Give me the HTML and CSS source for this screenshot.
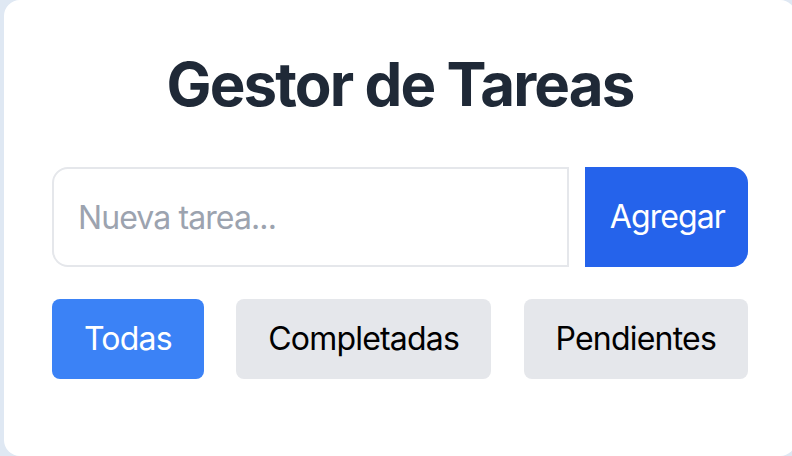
FILE: index.html
```html
<!DOCTYPE html>
<html lang="es">
<head>
<meta charset="utf-8">
<link rel="stylesheet" href="styles.css">
</head>
<body>
<div class="card">
  <h1 class="title">Gestor de Tareas</h1>
  <div class="add-row">
    <input class="task-input" type="text" placeholder="Nueva tarea...">
    <button class="add-btn">Agregar</button>
  </div>
  <div class="filters">
    <button class="filter active">Todas</button>
    <button class="filter">Completadas</button>
    <button class="filter">Pendientes</button>
  </div>
</div>
</body>
</html>
```
FILE: styles.css
```css
html, body {
  margin: 0;
  padding: 0;
  height: 456px;
  overflow: hidden;
}
body {
  background: #dfe8f3;
  font-family: Inter, "Noto Sans", sans-serif;
}
.card {
  box-sizing: border-box;
  width: 792px;
  height: 456px;
  margin-left: 4px;
  background: #ffffff;
  border-radius: 16px;
  padding: 48px;
}
.title {
  margin: 0 0 47px;
  font-size: 60px;
  line-height: 72px;
  font-weight: 700;
  letter-spacing: -1.9px;
  color: #1f2937;
  text-align: center;
}
.add-row {
  display: flex;
  gap: 16px;
  margin-bottom: 32px;
}
.task-input {
  flex: 1;
  min-width: 0;
  box-sizing: border-box;
  height: 100px;
  border: 2px solid #e5e7eb;
  border-radius: 16px 0 0 16px;
  padding: 24px 24px;
  font-family: Inter, "Noto Sans", sans-serif;
  font-size: 32px;
  line-height: 48px;
  letter-spacing: -0.9px;
  color: #111827;
  outline: none;
}
.task-input::placeholder {
  color: #9ca3af;
}
.add-btn {
  height: 100px;
  border: none;
  background: #2563eb;
  color: #ffffff;
  border-radius: 0 16px 16px 0;
  padding: 0 23px 0 25px;
  font-family: Inter, "Noto Sans", sans-serif;
  font-size: 32px;
  line-height: 48px;
  letter-spacing: -0.9px;
}
.filters {
  display: flex;
  justify-content: space-between;
}
.filter {
  height: 80px;
  border: none;
  border-radius: 8px;
  background: #e5e7eb;
  color: #000000;
  padding: 0 32px;
  font-family: Inter, "Noto Sans", sans-serif;
  font-size: 32px;
  line-height: 48px;
  letter-spacing: -0.8px;
}
.filter.active {
  background: #3b82f6;
  color: #ffffff;
}
```
